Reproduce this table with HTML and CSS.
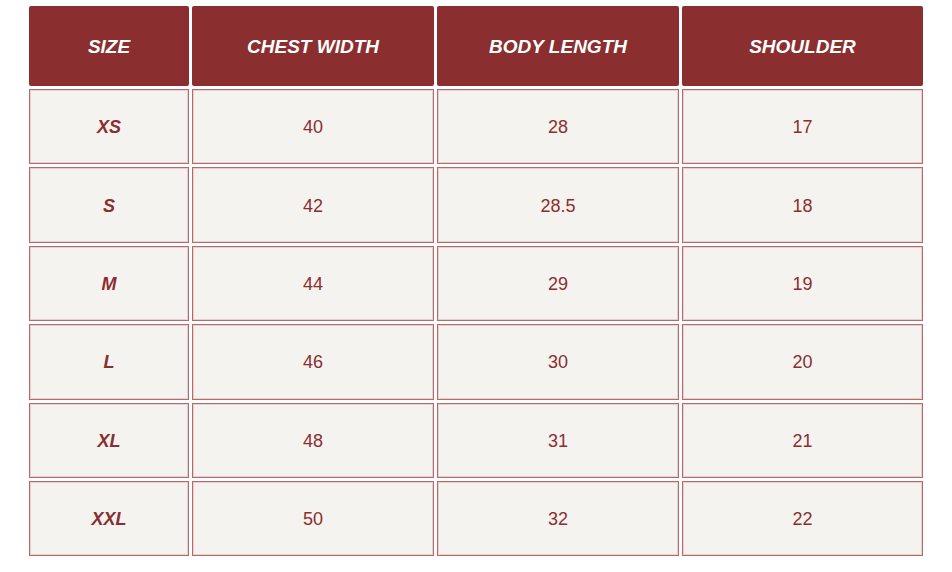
FILE: index.html
```html
<!DOCTYPE html>
<html>
<head>
<meta charset="utf-8">
<link rel="stylesheet" href="styles.css">
</head>
<body>
<div class="wrap">
<table class="size-table">
  <colgroup>
    <col class="c1"><col class="c2"><col class="c3"><col class="c4">
  </colgroup>
  <thead>
    <tr><th>SIZE</th><th>CHEST WIDTH</th><th>BODY LENGTH</th><th>SHOULDER</th></tr>
  </thead>
  <tbody>
    <tr><td class="size">XS</td><td>40</td><td>28</td><td>17</td></tr>
    <tr><td class="size">S</td><td>42</td><td>28.5</td><td>18</td></tr>
    <tr><td class="size">M</td><td>44</td><td>29</td><td>19</td></tr>
    <tr><td class="size">L</td><td>46</td><td>30</td><td>20</td></tr>
    <tr><td class="size">XL</td><td>48</td><td>31</td><td>21</td></tr>
    <tr><td class="size">XXL</td><td>50</td><td>32</td><td>22</td></tr>
  </tbody>
</table>
</div>
</body>
</html>
```
FILE: styles.css
```css
html, body {
  margin: 0;
  padding: 0;
  background: #ffffff;
}
.wrap {
  padding: 3px 0 0 26px;
}
.size-table {
  border-collapse: separate;
  border-spacing: 3px;
  width: 900px;
  table-layout: fixed;
  font-family: "Liberation Sans", Arial, sans-serif;
}
.c1 { width: 160px; }
.c2 { width: 242px; }
.c3 { width: 242px; }
.c4 { width: 241px; }
.size-table th {
  height: 80px;
  padding: 1px 0 0;
  background: #8a2e2f;
  color: #ffffff;
  font-size: 19px;
  font-weight: bold;
  font-style: italic;
  text-align: center;
  vertical-align: middle;
  border-radius: 2px;
  box-sizing: border-box;
}
.size-table td {
  height: 75.4px;
  padding: 2px 0 0;
  box-sizing: border-box;
  background: #f5f3f0;
  border: 1px solid #b9686c;
  box-shadow: inset 0 0 0 1px #e6d0d0;
  color: #8a2e2f;
  font-size: 18px;
  text-align: center;
  vertical-align: middle;
}
.size-table td.size {
  font-weight: bold;
  font-style: italic;
}
```
